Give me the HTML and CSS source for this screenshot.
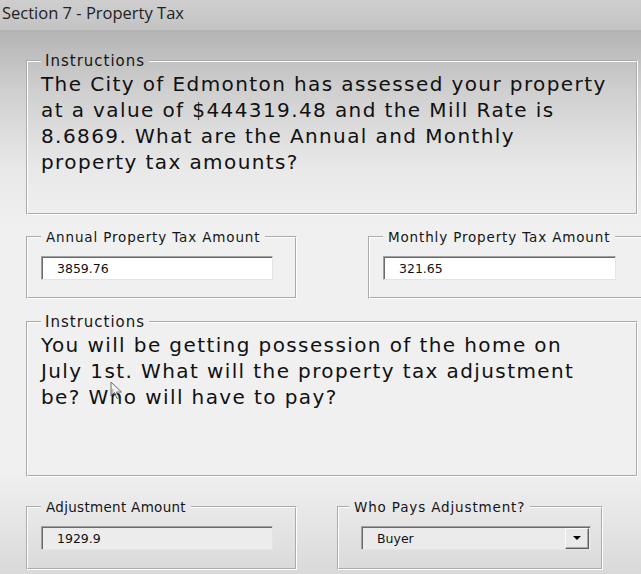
FILE: index.html
```html
<!DOCTYPE html>
<html lang="en">
<head>
    <meta charset="utf-8">
    <title>Section 7 - Property Tax</title>
    <link rel="stylesheet" href="styles.css">
</head>
<body>
    <div class="titlebar">Section 7 - Property Tax</div>
    <div class="form">
        <fieldset class="group group-wide">
            <legend>Instructions</legend>
            <p class="prompt">The City of Edmonton has assessed your property<br>
                at a value of $444319.48 and the Mill Rate is<br>
                8.6869. What are the Annual and Monthly<br>
                property tax amounts?</p>
        </fieldset>

        <div class="row row-tax">
            <fieldset class="group group-small">
                <legend>Annual Property Tax Amount</legend>
                <input class="field" type="text" value="3859.76">
            </fieldset>
            <fieldset class="group group-small group-monthly">
                <legend>Monthly Property Tax Amount</legend>
                <input class="field" type="text" value="321.65">
            </fieldset>
        </div>

        <fieldset class="group group-wide group-second">
            <legend>Instructions</legend>
            <p class="prompt">You will be getting possession of the home on<br>
                July 1st. What will the property tax adjustment<br>
                be? Who will have to pay?</p>
            <svg class="cursor" width="14" height="20" viewBox="0 0 14 20">
                <path d="M1 1 L1 15 L4.5 11.5 L7 17.5 L9 16.6 L6.6 11 L11.5 11 Z" fill="#f2f2f2" stroke="#444" stroke-width="1"/>
            </svg>
        </fieldset>

        <div class="row row-adjust">
            <fieldset class="group group-small">
                <legend class="legend-tight">Adjustment Amount</legend>
                <input class="field field-readonly" type="text" value="1929.9" readonly>
            </fieldset>
            <fieldset class="group group-small group-payer">
                <legend>Who Pays Adjustment?</legend>
                <div class="combo">
                    <span class="combo-value">Buyer</span>
                    <span class="combo-button"><span class="arrow"></span></span>
                </div>
            </fieldset>
        </div>
    </div>
</body>
</html>
```

FILE: styles.css
```css
html, body {
    margin: 0;
    height: 100%;
    overflow: hidden;
}
body {
    font-family: "DejaVu Sans", sans-serif;
    color: #151515;
    background: linear-gradient(#b4b4b4 30px, #cfcfcf 90px, #e9e9e9 170px, #f0f0f0 230px, #f0f0f0 470px, #e6e6e6 520px, #d9d9d9 574px);
}
.titlebar {
    height: 30px;
    padding-left: 2px;
    font-family: "Open Sans", sans-serif;
    font-size: 16.5px;
    line-height: 26px;
    color: #222;
    background: linear-gradient(#cecece, #c3c3c3);
}
.form {
    display: flex;
    flex-direction: column;
    align-items: flex-start;
    gap: 14px;
    padding: 22px 0 0 26px;
}
.group {
    margin: 0;
    padding: 0 10px 0 13px;
    border: 2px groove #fff;
    min-width: 0;
    box-sizing: border-box;
}
.group legend {
    padding: 0 4px;
    font-size: 15px;
    line-height: 18px;
    letter-spacing: 1px;
}
.group-wide {
    width: 612px;
    position: relative;
}
.prompt {
    margin: 1px 0 0;
    height: 142px;
    font-size: 20px;
    line-height: 26px;
    letter-spacing: 1.4px;
    white-space: nowrap;
    color: #111;
}
.group-second .prompt {
    height: 143px;
}
.row {
    display: flex;
    gap: 71px;
}
.row-adjust {
    margin-top: 8px;
    gap: 40px;
}
.group-small {
    width: 271px;
    flex-shrink: 0;
    padding-bottom: 17px;
}
.group-small legend {
    font-size: 13.5px;
    line-height: 16px;
    letter-spacing: 0.85px;
    padding: 0 5px;
}
.group-small .legend-tight {
    letter-spacing: 0.3px;
}
.group-monthly {
    width: 290px;
}
.group-payer {
    width: 266px;
    padding-left: 10px;
}
.row-adjust .group-small {
    padding-bottom: 18px;
}
.field {
    display: block;
    margin-top: 11px;
    width: 232px;
    height: 24px;
    box-sizing: border-box;
    padding: 0 0 0 15px;
    font-family: "DejaVu Sans", sans-serif;
    font-size: 12.5px;
    color: #111;
    background: #fff;
    border: 1px solid #e4e4e4;
    border-top-color: #a0a0a0;
    border-left-color: #a0a0a0;
    box-shadow: inset 1px 1px 0 #6a6a6a;
    outline: none;
}
.group-monthly .field {
    width: 233px;
}
.field-readonly {
    background: #ececec;
}
.combo {
    display: flex;
    align-items: center;
    justify-content: space-between;
    margin: 11px 0 0 12px;
    width: 230px;
    height: 24px;
    box-sizing: border-box;
    padding: 1px 1px 1px 15px;
    font-size: 12.5px;
    color: #111;
    background: #ebebeb;
    border: 1px solid #e4e4e4;
    border-top-color: #a0a0a0;
    border-left-color: #a0a0a0;
    box-shadow: inset 1px 1px 0 #6a6a6a;
}
.combo-button {
    display: flex;
    align-items: center;
    justify-content: center;
    width: 24px;
    height: 21px;
    box-sizing: border-box;
    background: #e9e9e9;
    border: 1px solid #5e5e5e;
    border-top-color: #fafafa;
    border-left-color: #fafafa;
    box-shadow: inset -1px -1px 0 #a8a8a8;
}
.arrow {
    width: 0;
    height: 0;
    border-left: 4px solid transparent;
    border-right: 4px solid transparent;
    border-top: 4px solid #000;
}
.cursor {
    position: absolute;
    left: 82px;
    top: 50px;
    opacity: 0.75;
}
```
